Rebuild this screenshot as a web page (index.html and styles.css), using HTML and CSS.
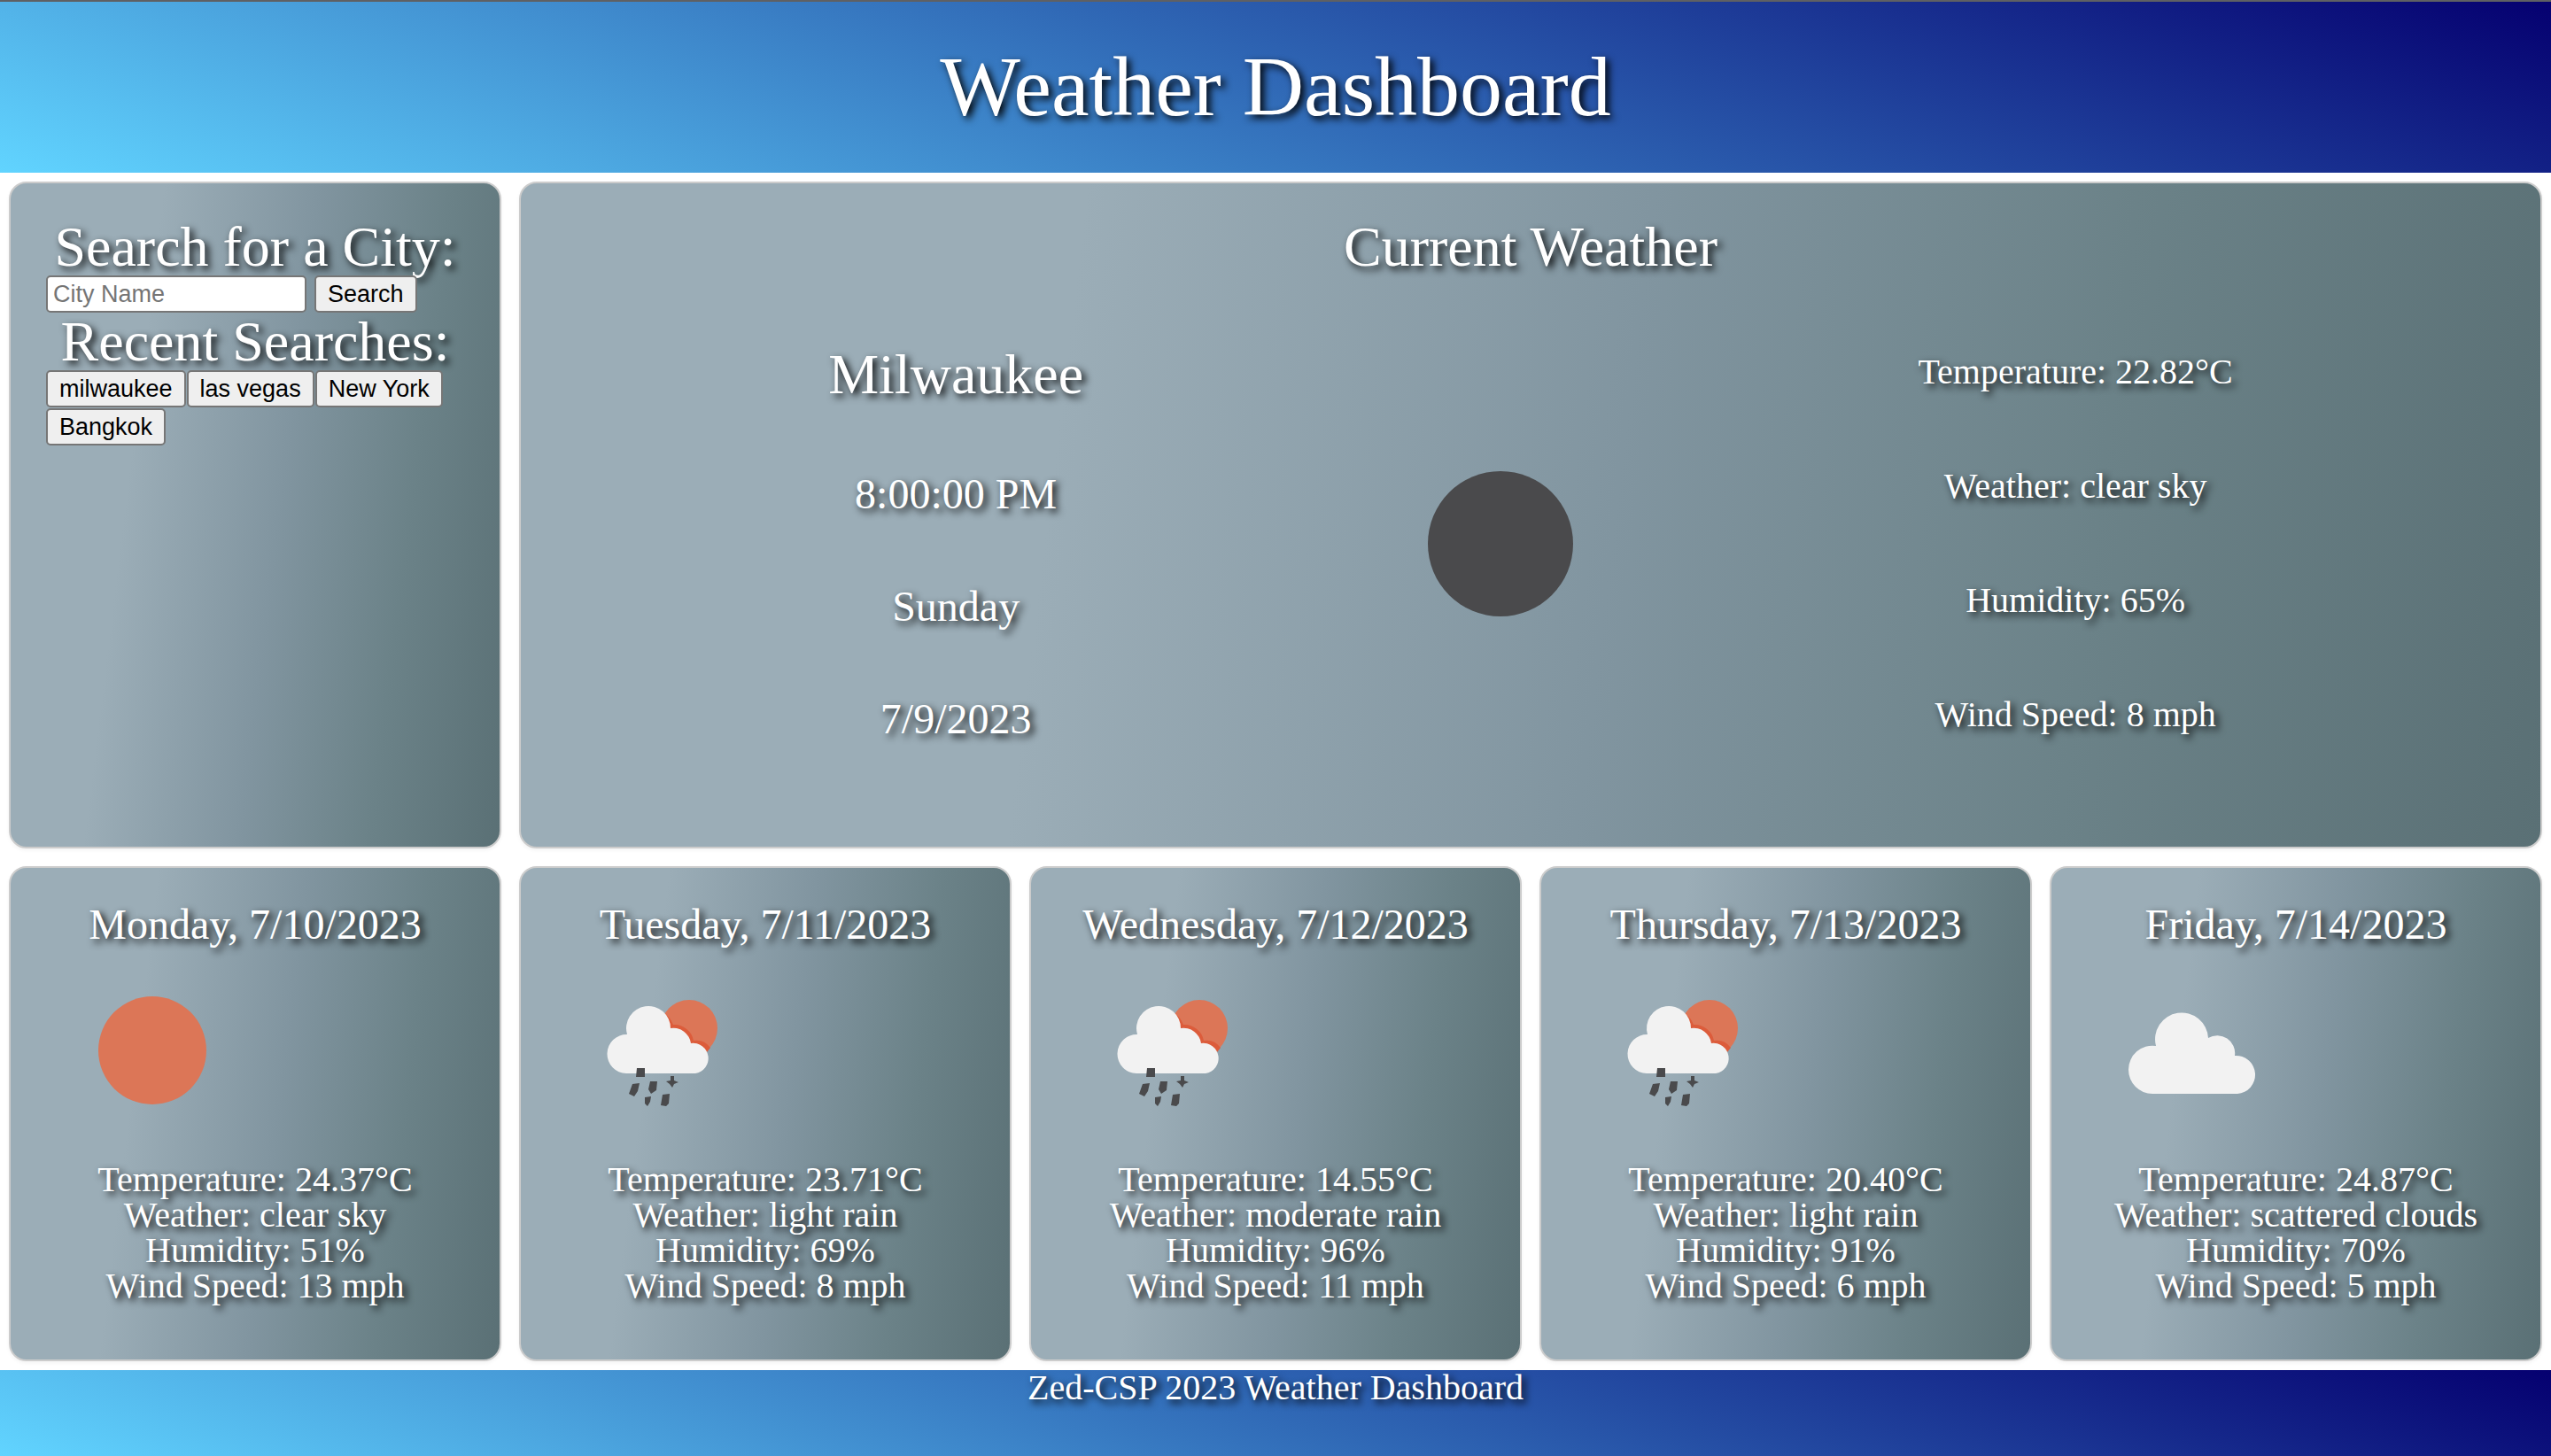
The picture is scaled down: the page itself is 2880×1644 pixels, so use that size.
FILE: index.html
```html
<!DOCTYPE html>
<html lang="en">
<head>
<meta charset="utf-8">
<title>Weather Dashboard</title>
<link rel="stylesheet" href="styles.css">
</head>
<body>
<svg class="symbols" aria-hidden="true">
  <symbol id="icon-sun" viewBox="0 0 200 200">
    <circle cx="100" cy="100" r="61" fill="#dc7657"/>
  </symbol>
  <symbol id="icon-cloud" viewBox="0 0 200 200">
    <path fill="#f2f2f2" d="M54 149A27 27 0 0 1 27 122A27 27 0 0 1 58 95A30 30 0 1 1 117 86A20 20 0 0 1 147 106A21 21 0 0 1 150 149Z"/>
  </symbol>
  <symbol id="icon-rain" viewBox="0 0 200 200">
    <circle cx="130" cy="75" r="32" fill="#dc7657"/>
    <path fill="#dc5c3b" d="M102 58A28 28 0 0 1 112 71A22 22 0 0 1 135 89A20 20 0 0 1 154 97L150 102L106 80Z"/>
    <path fill="#f2f2f2" d="M59 126A22 22 0 0 1 60 82A25 25 0 1 1 109 75A20 20 0 0 1 132 92A17 17 0 0 1 137 126Z"/>
    <g fill="#4a4a4c">
      <path d="M71 120H80V130H70ZM66 138L74 137L72 146L68 152L62 149ZM86 135H94L93 145L87 149L84 144ZM109 129H113V134L118 136L113 138L111 142L108 138L104 135L109 134ZM80 153L87 152L86 158L83 163L80 160ZM100 150L108 149L107 160L104 163L98 162Z"/>
    </g>
  </symbol>
  <symbol id="icon-moon" viewBox="0 0 200 200">
    <circle cx="100" cy="100" r="82" fill="#4a4a4c"/>
  </symbol>
</svg>

<header class="page-header"><h1>Weather Dashboard</h1></header>

<main class="dashboard">
  <section class="card search">
    <form>
      <h2><label for="city">Search for a City:</label></h2>
      <div class="row">
        <input id="city" type="text" placeholder="City Name">
        <button type="button">Search</button>
      </div>
    </form>
    <h2>Recent Searches:</h2>
    <div class="recent">
      <button type="button">milwaukee</button>
      <button type="button">las vegas</button>
      <button type="button">New York</button>
      <button type="button">Bangkok</button>
    </div>
  </section>

  <section class="card current">
    <h2>Current Weather</h2>
    <div class="current-body">
      <div class="place">
        <h2>Milwaukee</h2>
        <h3>8:00:00 PM</h3>
        <h3>Sunday</h3>
        <h3>7/9/2023</h3>
      </div>
      <svg class="moon" role="img" aria-label="clear sky"><use href="#icon-moon"/></svg>
      <ul class="details">
        <li>Temperature: 22.82°C</li>
        <li>Weather: clear sky</li>
        <li>Humidity: 65%</li>
        <li>Wind Speed: 8 mph</li>
      </ul>
    </div>
  </section>

  <section class="card day">
    <h3>Monday, 7/10/2023</h3>
    <svg class="icon" role="img" aria-label="clear sky"><use href="#icon-sun"/></svg>
    <ul>
      <li>Temperature: 24.37°C</li>
      <li>Weather: clear sky</li>
      <li>Humidity: 51%</li>
      <li>Wind Speed: 13 mph</li>
    </ul>
  </section>
  <section class="card day">
    <h3>Tuesday, 7/11/2023</h3>
    <svg class="icon" role="img" aria-label="light rain"><use href="#icon-rain"/></svg>
    <ul>
      <li>Temperature: 23.71°C</li>
      <li>Weather: light rain</li>
      <li>Humidity: 69%</li>
      <li>Wind Speed: 8 mph</li>
    </ul>
  </section>
  <section class="card day">
    <h3>Wednesday, 7/12/2023</h3>
    <svg class="icon" role="img" aria-label="moderate rain"><use href="#icon-rain"/></svg>
    <ul>
      <li>Temperature: 14.55°C</li>
      <li>Weather: moderate rain</li>
      <li>Humidity: 96%</li>
      <li>Wind Speed: 11 mph</li>
    </ul>
  </section>
  <section class="card day">
    <h3>Thursday, 7/13/2023</h3>
    <svg class="icon" role="img" aria-label="light rain"><use href="#icon-rain"/></svg>
    <ul>
      <li>Temperature: 20.40°C</li>
      <li>Weather: light rain</li>
      <li>Humidity: 91%</li>
      <li>Wind Speed: 6 mph</li>
    </ul>
  </section>
  <section class="card day">
    <h3>Friday, 7/14/2023</h3>
    <svg class="icon" role="img" aria-label="scattered clouds"><use href="#icon-cloud"/></svg>
    <ul>
      <li>Temperature: 24.87°C</li>
      <li>Weather: scattered clouds</li>
      <li>Humidity: 70%</li>
      <li>Wind Speed: 5 mph</li>
    </ul>
  </section>
</main>

<footer class="page-footer">Zed-CSP 2023 Weather Dashboard</footer>
</body>
</html>
```
FILE: styles.css
```css
* {
  box-sizing: border-box;
  margin: 0;
  padding: 0;
}

body {
  display: flex;
  flex-direction: column;
  min-height: 100vh;
  background: #fff;
  color: #fff;
  font-family: "Liberation Serif", "Times New Roman", serif;
  font-size: 40px;
  line-height: 1;
  text-shadow: 4px 4px 8px #000;
}

h1, h2, h3 {
  font-weight: 400;
  text-align: center;
}

h1 { font-size: 96px; }
h2 { font-size: 64px; }
h3 { font-size: 48px; }

ul { list-style: none; }

.symbols {
  position: absolute;
  width: 0;
  height: 0;
}

.page-header,
.page-footer {
  background: linear-gradient(20deg, #61d4ff, #3069b6 50%, #050070);
  text-align: center;
}

.page-header {
  padding: 48px 0 49px;
  background-clip: padding-box;
  border-top: 2px solid #5f6063;
}

.page-footer {
  flex: 1;
  min-height: 96px;
}

.dashboard {
  display: grid;
  grid-template-columns: repeat(5, 1fr);
  gap: 20px;
  padding: 10px;
}

.card {
  padding: 40px;
  border: 2px solid #ccc;
  border-radius: 20px;
  background: linear-gradient(97deg, #9badb7 27%, #8195a0 54%, #6b8288 77%, #5a7075);
  box-shadow: 0 2px 4px rgba(0, 0, 0, 0.05);
}

.search,
.current {
  min-height: 753px;
}

.current {
  display: flex;
  flex-direction: column;
  grid-column: span 4;
  padding: 40px 0;
}

.row {
  display: flex;
  gap: 9px;
  margin-bottom: 1px;
}

.recent {
  display: flex;
  flex-wrap: wrap;
  gap: 1px;
}

input,
button {
  height: 42px;
  border: 2px solid #767676;
  border-radius: 5px;
  font-family: "Liberation Sans", Arial, sans-serif;
  font-size: 27px;
  line-height: 32px;
}

input {
  width: 294px;
  padding: 0 6px;
  background: #fff;
  color: #000;
}

input::placeholder {
  color: #757575;
}

button {
  padding: 0 13px;
  background: #efefef;
  color: #000;
}

.current-body {
  flex: 1;
  display: flex;
  align-items: center;
  justify-content: space-evenly;
  gap: 24px;
}

.place,
.details {
  display: grid;
  text-align: center;
}

.place { gap: 79px; }
.details { gap: 89px; }

.moon {
  width: 200px;
  height: 200px;
}

.day {
  min-height: 559px;
  text-align: center;
}

.icon {
  display: block;
  width: 200px;
  height: 200px;
  margin: 18px 0 26px 20px;
}
```
